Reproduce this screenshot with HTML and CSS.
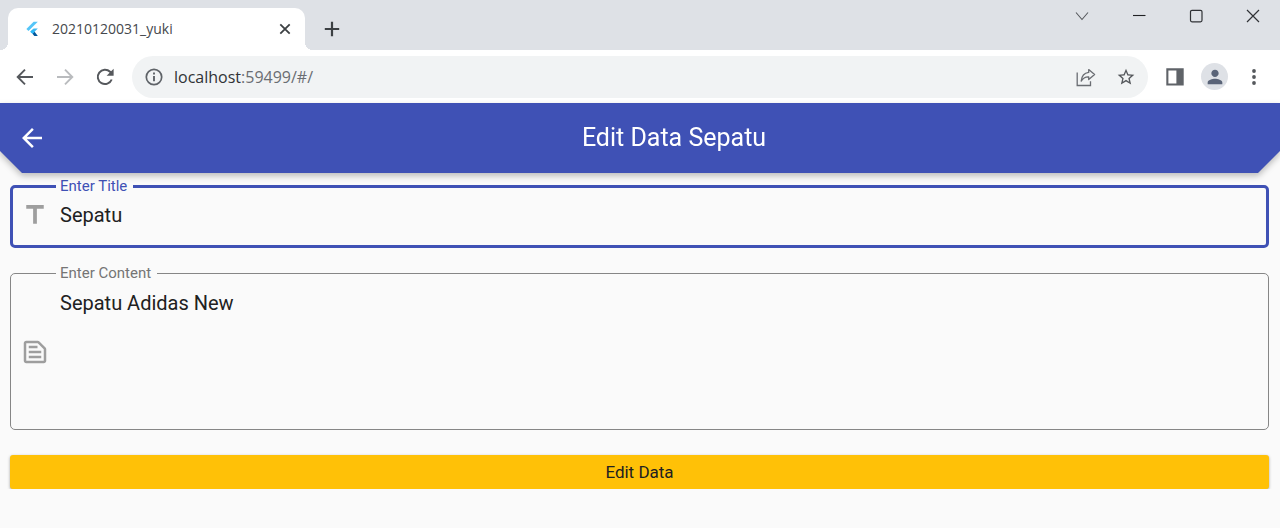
FILE: index.html
```html
<!DOCTYPE html>
<html lang="id">
<head>
<meta charset="utf-8">
<title>20210120031_yuki</title>
<link rel="stylesheet" href="styles.css">
</head>
<body>
<div class="tab-strip">
  <div class="tab">
    <svg class="favicon" width="16" height="16" viewBox="0 0 16 16" aria-hidden="true">
      <path fill="#54c5f8" d="M9.6 0.8h4.2L4.5 10 2.4 7.9z"/>
      <path fill="#40b8f0" d="M9.6 7.4h4.2L10.6 10.7 8.5 12.8 6.3 10.7z"/>
      <path fill="#01579b" d="M8.5 12.8l2.1-2.1 3.2 4.3H10.3z"/>
      <path fill="#29b6f6" d="M6.3 10.7l2.1-2.1 2.2 2.1-2.1 2.1z"/>
    </svg>
    <span class="tab-title">20210120031_yuki</span>
    <button class="plain" type="button" aria-label="Close tab">
      <svg width="20" height="20" viewBox="0 0 20 20"><path d="M5.3 5.3l9.4 9.4M14.7 5.3l-9.4 9.4" stroke="#3c4043" stroke-width="1.8"/></svg>
    </button>
  </div>
  <button class="plain new-tab" type="button" aria-label="New tab">
    <svg width="20" height="20" viewBox="0 0 20 20"><path d="M10 2.8v14.4M2.8 10h14.4" stroke="#3c4043" stroke-width="2.2"/></svg>
  </button>
  <div class="window-controls">
    <button class="plain" type="button" aria-label="Search tabs">
      <svg width="16" height="16" viewBox="0 0 16 16"><path d="M2 4.5l6 7 6-7" fill="none" stroke="#55585c" stroke-width="1.1"/></svg>
    </button>
    <button class="plain" type="button" aria-label="Minimize">
      <svg width="16" height="16" viewBox="0 0 16 16"><path d="M2 7.5h12.5" stroke="#202124" stroke-width="1.1"/></svg>
    </button>
    <button class="plain" type="button" aria-label="Maximize">
      <svg width="16" height="16" viewBox="0 0 16 16"><rect x="2.5" y="2.3" width="11.5" height="11.5" rx="1.5" fill="none" stroke="#303236" stroke-width="1.2"/></svg>
    </button>
    <button class="plain" type="button" aria-label="Close window">
      <svg width="16" height="16" viewBox="0 0 16 16"><path d="M2 2l12 12M14 2L2 14" stroke="#303236" stroke-width="1.2"/></svg>
    </button>
  </div>
</div>
<div class="toolbar">
  <div class="nav">
    <button class="plain" type="button" aria-label="Back">
      <svg width="20" height="20" viewBox="0 0 20 20"><path d="M18 10H3M10 2.7L2.7 10l7.3 7.3" fill="none" stroke="#55585c" stroke-width="1.9"/></svg>
    </button>
    <button class="plain" type="button" aria-label="Forward">
      <svg width="20" height="20" viewBox="0 0 20 20"><path d="M2 10h15M10 2.7l7.3 7.3-7.3 7.3" fill="none" stroke="#b9bbbe" stroke-width="1.9"/></svg>
    </button>
    <button class="plain" type="button" aria-label="Reload">
      <svg width="20" height="20" viewBox="0 0 20 20"><path d="M16.7 12.5A7.2 7.2 0 1 1 15.1 4.8L17 6.8" fill="none" stroke="#55585c" stroke-width="2"/><path d="M18.6 1.8v7h-7z" fill="#55585c"/></svg>
    </button>
  </div>
  <div class="omnibox">
    <svg width="18" height="18" viewBox="0 0 18 18" aria-hidden="true"><circle cx="9" cy="9" r="7.7" fill="none" stroke="#5f6368" stroke-width="1.7"/><path d="M9 8v5.2M9 4.6v2" stroke="#5f6368" stroke-width="1.9"/></svg>
    <span class="url">localhost<span class="url-rest">:59499/#/</span></span>
    <button class="plain" type="button" aria-label="Share">
      <svg width="20" height="20" viewBox="0 0 20 20"><path d="M1.2 5.5v13h13.3V14.3" fill="none" stroke="#6a6d72" stroke-width="1.3"/><path d="M12.7 2.6l5.9 5-5.9 5V9.8C9.6 9.6 7 11 5.2 14.1 5.6 9.4 8.2 6 12.7 5.4z" fill="none" stroke="#6a6d72" stroke-width="1.3" stroke-linejoin="round"/></svg>
    </button>
    <button class="plain" type="button" aria-label="Bookmark">
      <svg width="20" height="20" viewBox="0 0 24 24"><path fill="#55585c" d="M22 9.24l-7.19-.62L12 2 9.19 8.63 2 9.24l5.46 4.73L5.82 21 12 17.27 18.18 21l-1.63-7.03L22 9.24zM12 15.4l-3.76 2.27 1-4.28-3.32-2.88 4.38-.38L12 6.1l1.71 4.04 4.38.38-3.32 2.88 1 4.28L12 15.4z"/></svg>
    </button>
  </div>
  <div class="actions">
    <button class="plain" type="button" aria-label="Side panel">
      <svg width="20" height="20" viewBox="0 0 20 20"><path fill="#5f6368" fill-rule="evenodd" d="M1.3 1.3h17.4v17.2H1.3zM3.4 3.4v13h8v-13z"/></svg>
    </button>
    <button class="plain avatar" type="button" aria-label="Profile">
      <svg width="22" height="22" viewBox="0 0 24 24"><path fill="#5a6478" d="M12 12c2.21 0 4-1.79 4-4s-1.79-4-4-4-4 1.79-4 4 1.79 4 4 4zm0 2c-2.67 0-8 1.34-8 4v2h16v-2c0-2.66-5.33-4-8-4z"/></svg>
    </button>
    <button class="plain" type="button" aria-label="Menu">
      <svg width="20" height="20" viewBox="0 0 20 20" fill="#55585c"><circle cx="10" cy="4" r="1.9"/><circle cx="10" cy="10" r="1.9"/><circle cx="10" cy="16" r="1.9"/></svg>
    </button>
  </div>
</div>
<main>
  <div class="app-bar-shadow">
    <header class="app-bar">
      <button class="plain" type="button" aria-label="Kembali">
        <svg width="30" height="30" viewBox="0 0 24 24"><path fill="#fff" d="M20 11H7.83l5.59-5.59L12 4l-8 8 8 8 1.41-1.41L7.83 13H20v-2z"/></svg>
      </button>
      <h1>Edit Data Sepatu</h1>
    </header>
  </div>
  <form class="form">
    <fieldset class="field field-active">
      <legend><label for="title">Enter Title</label></legend>
      <div class="field-row">
        <svg width="30" height="30" viewBox="0 0 24 24" aria-hidden="true"><path fill="#9e9e9e" d="M5 4v3h5.500v12h3V7H19V4z"/></svg>
        <input id="title" type="text" value="Sepatu">
      </div>
    </fieldset>
    <fieldset class="field">
      <legend><label for="content">Enter Content</label></legend>
      <div class="field-row">
        <svg width="30" height="30" viewBox="0 0 24 24" aria-hidden="true"><path fill="#9e9e9e" d="M20.41 8.41l-4.83-4.83c-.37-.37-.88-.58-1.41-.58H5c-1.100 0-2 .9-2 2v14c0 1.100.9 2 2 2h14c1.100 0 2-.9 2-2V9.830c0-.53-.21-1.040-.59-1.420zM19 19H5V5h9.170L19 9.830V19zM7 15h10v2H7zM7 11h10v2H7zM7 7h7v2H7z"/></svg>
        <textarea id="content" rows="5">Sepatu Adidas New</textarea>
      </div>
    </fieldset>
    <button class="submit" type="button">Edit Data</button>
  </form>
</main>
</body>
</html>
```
FILE: styles.css
```css
* {
  box-sizing: border-box;
}

body {
  margin: 0;
  background: #fafafa;
  color: #212121;
  font-family: Roboto, sans-serif;
}

svg {
  display: block;
  flex: none;
}

.plain {
  display: flex;
  align-items: center;
  justify-content: center;
  padding: 0;
  border: 0;
  background: none;
}

/* Browser window */
.tab-strip {
  display: flex;
  align-items: flex-start;
  padding: 8px 0 0 8px;
  background: #dee1e6;
}

.tab {
  position: relative;
  display: flex;
  align-items: center;
  width: 297px;
  height: 42px;
  padding: 0 10px 0 16px;
  gap: 12px;
  border-radius: 10px 10px 0 0;
  background: #fff;
}

.tab::before,
.tab::after {
  content: "";
  position: absolute;
  bottom: 0;
  width: 8px;
  height: 8px;
}

.tab::before {
  right: 100%;
  background: radial-gradient(circle at 0 0, #dee1e6 8px, #fff 8px);
}

.tab::after {
  left: 100%;
  background: radial-gradient(circle at 100% 0, #dee1e6 8px, #fff 8px);
}

.tab-title {
  flex: 1;
  color: #45484c;
  font: 14px/20px "Open Sans", sans-serif;
}

.new-tab {
  height: 42px;
  margin-left: 17px;
}

.window-controls {
  display: flex;
  gap: 3px;
  margin-left: auto;
}

.window-controls .plain {
  width: 54px;
  height: 16px;
}

.toolbar {
  display: flex;
  align-items: center;
  height: 53px;
  padding: 0 16px 0 15px;
  background: #fff;
}

.nav {
  display: flex;
  gap: 20px;
}

.omnibox {
  display: flex;
  flex: 1;
  align-items: center;
  height: 42px;
  margin: 0 17px 0 17px;
  padding: 0 12px 0 13px;
  border-radius: 21px;
  background: #f1f3f4;
}

.url {
  flex: 1;
  margin-left: 11px;
  color: #303236;
  font: 16px/24px "Open Sans", sans-serif;
}

.url-rest {
  color: #6a6d72;
}

.omnibox .plain + .plain {
  margin-left: 20px;
}

.actions {
  display: flex;
  align-items: center;
  gap: 16px;
}

.avatar {
  width: 27px;
  height: 27px;
  border-radius: 50%;
  background: #dee1e6;
}

/* Application */
.app-bar-shadow {
  filter: drop-shadow(0 3px 3px rgba(0, 0, 0, 0.25));
}

.app-bar {
  display: flex;
  align-items: center;
  height: 70px;
  padding-left: 17px;
  background: #3f51b5;
  clip-path: polygon(0 0, 100% 0, 100% calc(100% - 22px), calc(100% - 22px) 100%, 22px 100%, 0 calc(100% - 22px));
}

.app-bar h1 {
  flex: 1;
  margin: 0 0 0 21px;
  color: #fff;
  font-size: 25px;
  font-weight: 400;
  line-height: 30px;
  text-align: center;
}

.form {
  padding: 5px 11px 0 10px;
}

.field {
  min-width: 0;
  margin: 0 0 17px;
  padding: 0 9px 8px;
  border: 1px solid #868686;
  border-radius: 5px;
}

.field-active {
  padding: 0 7px 10px;
  border: 3px solid #3f51b5;
}

.field legend {
  margin-left: 36px;
  padding: 0 6px 0 4px;
  color: #757575;
  font-size: 15px;
  line-height: 17px;
}

.field-active legend {
  color: #3f51b5;
}

.field label {
  display: block;
}

.field-row {
  display: flex;
  align-items: center;
  gap: 10px;
}

.field input,
.field textarea {
  display: block;
  flex: 1;
  min-width: 0;
  border: 0;
  outline: 0;
  background: none;
  color: #212121;
  font: 20px/24px Roboto, sans-serif;
}

.field input {
  height: 40px;
  padding: 0;
}

.field textarea {
  padding: 9px 0 10px;
  resize: none;
}

.submit {
  display: block;
  width: 100%;
  margin-top: 25px;
  padding: 7px;
  border: 0;
  border-radius: 3px;
  background: #ffc107;
  box-shadow: 0 1px 3px rgba(0, 0, 0, 0.35);
  color: #212121;
  font: 17px/20px Roboto, sans-serif;
}
```
